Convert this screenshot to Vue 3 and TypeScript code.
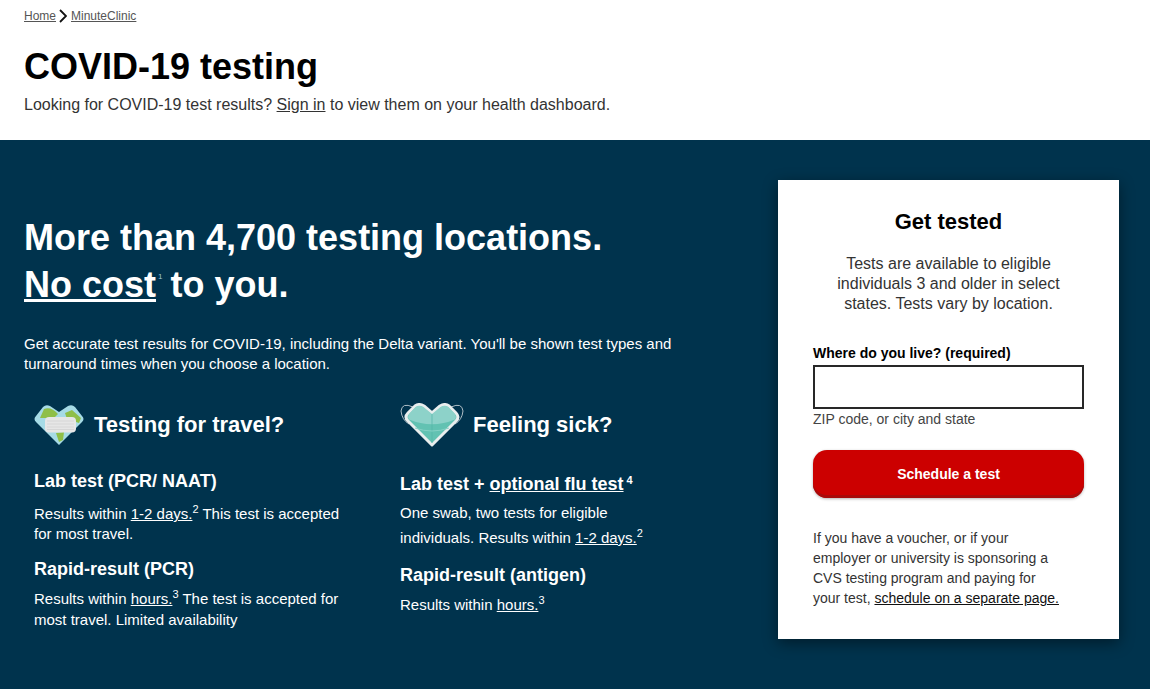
<script setup lang="ts">
interface Test { title: string }
const title: Test = { title: 'COVID-19 testing' }
</script>

<template>
  <div class="page">
    <header class="top">
      <nav class="crumbs">
        <a class="crumb">Home</a>
        <svg class="chev" width="8" height="14" viewBox="0 0 8 14"><path d="M1 1l6 6-6 6" fill="none" stroke="#111" stroke-width="1.8" /></svg>
        <a class="crumb">MinuteClinic</a>
      </nav>
      <h1 class="title">{{ title.title }}</h1>
      <p class="lead">Looking for COVID-19 test results? <a class="ul">Sign in</a> to view them on your health dashboard.</p>
    </header>

    <section class="hero">
      <div class="left">
        <h2 class="headline">More than 4,700 testing locations.<br /><a class="ul">No cost</a><sup class="tiny">1</sup> to you.</h2>
        <p class="intro">Get accurate test results for COVID-19, including the Delta variant. You'll be shown test types and turnaround times when you choose a location.</p>
        <div class="cols">
          <div class="col col-a">
            <div class="col-head">
              <svg class="ico" width="50" height="42" viewBox="0 0 50 42">
                <path d="M25 41L2 18Q-1 15 2 12L9 3Q12 0 16 2L25 8 34 2Q38 0 41 3L48 12Q51 15 48 18Z" fill="#a6dbe6" />
                <path d="M10 5Q17 2 24 10L20 14 6 14ZM31 9L38 6 47 14 45 19 33 15ZM22 29L30 28 29 36 25 38Z" fill="#8fbf48" />
                <rect x="11" y="13" width="31" height="15.5" rx="4" fill="#e6e6e6" />
                <path d="M13 17H40M13 20H40M13 23H40M13 25.5H40" stroke="#d6d6d6" stroke-width="1" />
              </svg>
              <h3>Testing for travel?</h3>
            </div>
            <h4 class="t1">Lab test (PCR/ NAAT)</h4>
            <p class="txt t1p">Results within <a class="ul">1-2 days.</a><sup>2</sup> This test is accepted for most travel.</p>
            <h4 class="t2">Rapid-result (PCR)</h4>
            <p class="txt t2p">Results within <a class="ul">hours.</a><sup>3</sup> The test is accepted for most travel. Limited availability</p>
          </div>
          <div class="col col-b">
            <div class="col-head">
              <svg class="ico2" width="64" height="44" viewBox="0 0 64 44">
                <path d="M13 4Q2 -1 1 8 2 17 9 21M51 4Q62 -1 63 8 62 17 55 21" fill="none" stroke="#aebdc5" stroke-width="1" />
                <path d="M32 42L8 18Q4 14 8 10L15 3Q19 0 24 3L32 10 40 3Q45 0 49 3L56 10Q60 14 56 18Z" fill="#62c2b2" stroke="#e9eeee" stroke-width="3" stroke-linejoin="round" />
                <path d="M9.5 10.5L15.5 4Q19 1.5 23.5 4L32 11 40.5 4Q45 1.5 48.5 4L54.5 10.5Q57 14 55 16.5 32 26 9 16.5 7 14 9.5 10.5Z" fill="#8dd2c9" />
                <path d="M32 11V40" stroke="#55b5a6" stroke-width="0.7" />
                <path d="M15 25Q32 31 49 25" fill="none" stroke="#84d1c5" stroke-width="1" />
              </svg>
              <h3>Feeling sick?</h3>
            </div>
            <h4 class="t3">Lab test + <a class="ul">optional flu test</a><sup class="s4">4</sup></h4>
            <p class="txt tall">One swab, two tests for eligible individuals. Results within <a class="ul">1-2 days.</a><sup>2</sup></p>
            <h4 class="t4">Rapid-result (antigen)</h4>
            <p class="txt last">Results within <a class="ul">hours.</a><sup>3</sup></p>
          </div>
        </div>
      </div>

      <aside class="card">
        <h2>Get tested</h2>
        <p class="card-text">Tests are available to eligible individuals 3 and older in select states. Tests vary by location.</p>
        <label class="lab" for="where">Where do you live? (required)</label>
        <input id="where" class="field" type="text" />
        <p class="hint">ZIP code, or city and state</p>
        <button class="btn" type="button">Schedule a test</button>
        <p class="note">If you have a voucher, or if your employer or university is sponsoring a CVS testing program and paying for your test, <a class="ul dark">schedule on a separate page.</a></p>
      </aside>
    </section>
  </div>
</template>

<style>
html, body { margin: 0; background: #fff; }
</style>

<style scoped>
.page { font-family: "Liberation Sans", Arial, sans-serif; width: 1150px; height: 689px; overflow: hidden; color: #333; }
.ul { text-decoration: underline; color: inherit; }
.top { height: 140px; box-sizing: border-box; padding: 9px 24px 0; background: #fff; }
.crumbs { display: flex; align-items: center; gap: 3px; height: 14px; font-size: 12px; }
.chev { margin-right: 1px; }
.crumb { color: #555; text-decoration: underline; }
.title { margin: 23px 0 0; font-size: 36px; line-height: 42px; font-weight: 700; color: #000; }
.lead { margin: 5px 0 0; font-size: 16px; line-height: 24px; color: #333; }
.hero { height: 549px; background: #00334d; display: flex; justify-content: space-between; padding: 40px 31px 0 24px; box-sizing: border-box; color: #fff; }
.left { width: 680px; }
.headline { margin: 34px 0 0; font-size: 36px; line-height: 47px; font-weight: 700; }
.tiny { font-size: 8px; font-weight: 400; vertical-align: 18px; line-height: 0; margin-left: 2px; margin-right: -2px; color: #9fc4d6; }
.intro { margin: 26px 0 0; font-size: 15px; line-height: 20px; }
.cols { display: flex; margin-top: 29px; font-size: 15px; }
.col-a { width: 376px; padding-left: 10px; box-sizing: border-box; }
.col-b { width: 290px; }
.col-head { display: flex; align-items: center; height: 44px; }
.col-head h3 { margin: 0; font-size: 22px; font-weight: 700; }
.ico { margin: 0 10px 0 0; }
.ico2 { margin: 0 9px 0 0; }
h4 { margin: 0; font-size: 18px; line-height: 22px; font-weight: 700; }
.t1 { margin-top: 23px; }
.t2 { margin-top: 14px; }
.t3 { margin-top: 26px; }
.t4 { margin-top: 14px; }
.txt { margin: 12px 0 0; line-height: 20.5px; width: 320px; }
.col-a .txt { width: 315px; }
.col-a .t1p { line-height: 20px; }
.col-a .t2p { margin-top: 9px; }
.tall { line-height: 25px; margin-top: 5px; }
.col-b .tall { width: 250px; }
.last { margin-top: 9px; }
sup { font-size: 11px; line-height: 0; vertical-align: 6px; }
.s4 { margin-left: 3px; }
.card { width: 341px; height: 459px; box-sizing: border-box; background: #fff; padding: 29px 35px 0; color: #333; box-shadow: 0 4px 14px rgba(0,0,0,.45); }
.card h2 { margin: 0; text-align: center; font-size: 22px; line-height: 26px; font-weight: 700; color: #000; }
.card-text { margin: 19px 0 0; text-align: center; font-size: 16px; line-height: 20px; }
.lab { display: block; margin-top: 31px; font-size: 14px; line-height: 16px; font-weight: 700; color: #000; }
.field { display: block; width: 271px; height: 44px; box-sizing: border-box; margin: 4px 0 0; border: 2px solid #282828; background: #fff; }
.hint { margin: 1px 0 0; font-size: 14px; line-height: 18px; color: #444; }
.btn { display: block; width: 271px; height: 48px; margin: 22px 0 0; border: 0; border-radius: 14px; background: #c00; box-shadow: inset 0 -3px 0 #a80a0a, 0 1px 3px rgba(0,0,0,.3); color: #fff; font: 700 14px "Liberation Sans", Arial, sans-serif; }
.note { margin: 30px 0 0; font-size: 14px; line-height: 20px; color: #333; width: 250px; }
.dark { color: #111; }
</style>
